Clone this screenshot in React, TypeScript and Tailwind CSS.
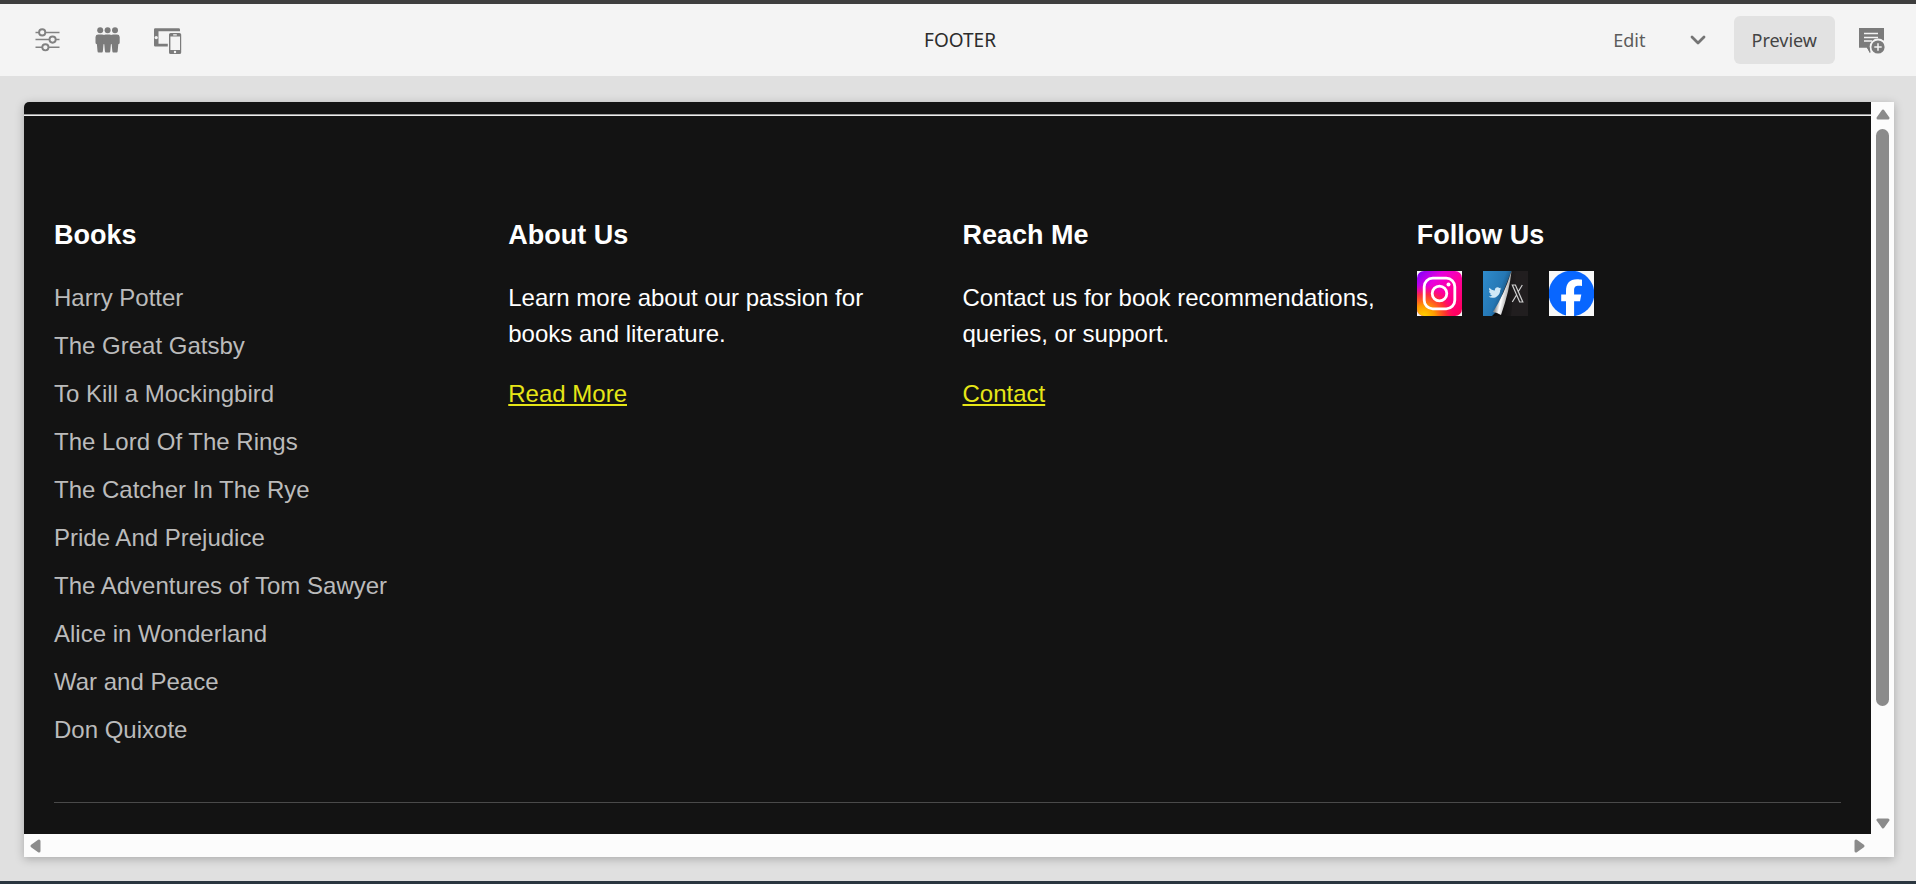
import React from "react";
import { FaTwitter } from "react-icons/fa6";

const books = [
  "Harry Potter",
  "The Great Gatsby",
  "To Kill a Mockingbird",
  "The Lord Of The Rings",
  "The Catcher In The Rye",
  "Pride And Prejudice",
  "The Adventures of Tom Sawyer",
  "Alice in Wonderland",
  "War and Peace",
  "Don Quixote",
];

function SlidersIcon() {
  return (
    <svg width="28" height="28" viewBox="0 0 28 28" fill="none" stroke="#828282" strokeWidth="1.6">
      <path d="M1.5 6.5H5M11.5 6.5H25.5M1.5 13.5H15.2M22 13.5H25.5M1.5 21.3H8M14.8 21.3H25.5" />
      <circle cx="8.2" cy="6.4" r="3.1" strokeWidth="1.9" />
      <circle cx="18.6" cy="13.6" r="3.1" strokeWidth="1.9" />
      <circle cx="11.4" cy="21.3" r="3.1" strokeWidth="1.9" />
    </svg>
  );
}

function PeopleIcon() {
  const body =
    "M-2 8.6H2Q4.5 8.6 4.7 11V16.5Q4.8 18 3.3 18.2L2.7 25Q2.6 26.5 1.6 26.5H-1.6Q-2.6 26.5 -2.7 25L-3.3 18.2Q-4.8 18 -4.7 16.5V11Q-4.5 8.6 -2 8.6Z";
  return (
    <svg width="28" height="28" viewBox="0 0 28 28" fill="#7b7b7b">
      {[6.2, 13.6, 21].map((x) => (
        <g key={x} transform={`translate(${x} 0)`}>
          <circle cx="0" cy="4.3" r="3" />
          <path d={body} />
        </g>
      ))}
    </svg>
  );
}

function DevicesIcon() {
  return (
    <svg width="28" height="28" viewBox="0 0 28 28">
      <path
        fill="#7b7b7b"
        fillRule="evenodd"
        d="M1.2 2.2H24.6Q26 2.2 26 3.6V5.2H4.5V17.8H13.8V20.6H1.2Q0 20.6 0 19.2V3.6Q0 2.2 1.2 2.2ZM2.2 9.9a1.7 1.7 0 1 0 0 3.4a1.7 1.7 0 1 0 0 -3.4Z"
      />
      <path
        fill="#7b7b7b"
        fillRule="evenodd"
        d="M16.6 7H25.4Q27.2 7 27.2 8.6V26.4Q27.2 28 25.4 28H16.6Q15 28 15 26.4V8.6Q15 7 16.6 7ZM16.4 10.5V23.9H26V10.5ZM21 24.8a1.2 1.2 0 1 0 0 2.4a1.2 1.2 0 1 0 0 -2.4ZM19.2 8.2V9.4H22.8V8.2Z"
      />
    </svg>
  );
}

function AnnotateIcon() {
  return (
    <svg width="28" height="28" viewBox="0 0 28 28">
      <path fill="#7b7b7b" d="M1 2H26V14.5H21L12.5 19L12 26.8L8.8 21.8H1Z" />
      <path stroke="#f4f4f4" strokeWidth="1.5" d="M6 7.6H20M6 11.4H20M6 15H14" fill="none" />
      <circle cx="20" cy="21" r="8.4" fill="#f4f4f4" />
      <path fill="#7b7b7b" d="M9 21H11.3L12.6 26.6L11.6 26.8Z" />
      <circle cx="20" cy="21" r="6.6" fill="#7b7b7b" />
      <path stroke="#f4f4f4" strokeWidth="1.5" d="M16.3 21H23.7M20 17.3V24.7" fill="none" />
    </svg>
  );
}

function InstagramLogo() {
  return (
    <svg width="45" height="45" viewBox="0 0 45 45">
      <defs>
        <linearGradient id="igBase" x1="0" y1="0" x2="1" y2="1">
          <stop offset="0" stopColor="#7a00ff" />
          <stop offset="0.3" stopColor="#e800dc" />
          <stop offset="0.55" stopColor="#ff00a0" />
          <stop offset="1" stopColor="#ff0050" />
        </linearGradient>
        <radialGradient id="igWarm" cx="0.15" cy="1.02" r="0.72">
          <stop offset="0" stopColor="#ffd600" />
          <stop offset="0.35" stopColor="#ff9a00" />
          <stop offset="0.7" stopColor="#ff3a20" stopOpacity="0.8" />
          <stop offset="1" stopColor="#ff0069" stopOpacity="0" />
        </radialGradient>
      </defs>
      <rect width="45" height="45" fill="#f5f5f5" />
      <rect width="45" height="45" rx="7" fill="url(#igBase)" />
      <rect width="45" height="45" rx="7" fill="url(#igWarm)" />
      <rect x="7.2" y="7.2" width="30.6" height="30.6" rx="8.5" fill="none" stroke="#fff" strokeWidth="2.8" />
      <circle cx="22.5" cy="22.5" r="7.3" fill="none" stroke="#fff" strokeWidth="2.8" />
      <circle cx="31.5" cy="13.5" r="2" fill="#fff" />
    </svg>
  );
}

function TwitterXLogo() {
  return (
    <svg width="45" height="45" viewBox="0 0 45 45">
      <defs>
        <linearGradient id="twBlue" x1="0" y1="0" x2="1" y2="0.6">
          <stop offset="0" stopColor="#2f8ccc" />
          <stop offset="0.6" stopColor="#2577b4" />
          <stop offset="1" stopColor="#0f3450" />
        </linearGradient>
        <linearGradient id="twCurl" x1="0.3" y1="0.4" x2="0.75" y2="0.6">
          <stop offset="0" stopColor="#8c8c8c" />
          <stop offset="0.45" stopColor="#ffffff" />
          <stop offset="1" stopColor="#b4b4b4" />
        </linearGradient>
        <linearGradient id="twShade" x1="0" y1="0" x2="1" y2="0">
          <stop offset="0" stopColor="#060606" />
          <stop offset="1" stopColor="#211e1f" />
        </linearGradient>
      </defs>
      <rect width="45" height="45" fill="#211e1f" />
      <path d="M28.5 0H34L28 45H8Z" fill="url(#twShade)" />
      <path d="M0 0H28.5L12 42L9 45H0Z" fill="url(#twBlue)" />
      <path d="M28.5 0Q26.5 20 18 44Q14 41.5 10 41Q21 24 28.5 0Z" fill="url(#twCurl)" />
      <g transform="translate(5.5 15)">
        <FaTwitter size={13} preserveAspectRatio="none" height={15} color="#cfe8f6" />
      </g>
      <path
        d="M29.3 14H32.4L39.8 31H36.7ZM39.3 14L34.9 21.3M29.3 31L33.7 23.8"
        fill="none"
        stroke="#cfcfcf"
        strokeWidth="1.2"
      />
    </svg>
  );
}

function FacebookLogo() {
  return (
    <svg width="45" height="45" viewBox="0 0 45 45">
      <rect width="45" height="45" fill="#f8f8f8" />
      <circle cx="22.5" cy="22.5" r="22.8" fill="#0866ff" />
      <path
        fill="#fff"
        d="M17 45V30.2H12.2V23.4H17V20.2C17 12.3 20.6 8.2 28 8.2C29.8 8.2 32 8.4 33 8.8V15C32 14.8 30.8 14.8 29.8 14.8C26.4 14.8 25.1 16.1 25.1 19.4V23.4H32.3L31 30.2H25.1V45Z"
      />
    </svg>
  );
}

function Arrow({ d }: { d: string }) {
  return (
    <svg width="14" height="14" viewBox="0 0 14 14" className="shrink-0">
      <path d={d} fill="#8b8b8b" stroke="#8b8b8b" strokeWidth="3" strokeLinejoin="round" />
    </svg>
  );
}

function Column({ title, children }: { title: string; children: React.ReactNode }) {
  return (
    <section className="min-w-0">
      <h3 className="mb-[15px] text-[27px] leading-[41px] font-bold text-white">{title}</h3>
      {children}
    </section>
  );
}

function Blurb({ text, link }: { text: string; link: string }) {
  return (
    <div className="pt-[9px] text-white">
      <p className="mb-6">{text}</p>
      <a href="#" className="text-[#e6e617] underline">
        {link}
      </a>
    </div>
  );
}

export default function App() {
  return (
    <div className="flex h-screen flex-col border-t-4 border-b-3 border-t-[#3e3e3e] border-b-[#2b3640] bg-[#e0e0e0]">
      <header className="grid h-[72px] shrink-0 grid-cols-[1fr_auto_1fr] items-center bg-[#f4f4f4] pr-[30px] pl-[34px] font-['Noto_Sans',sans-serif] text-[18px]">
        <div className="flex items-center gap-8">
          <button type="button" aria-label="Page information"><SlidersIcon /></button>
          <button type="button" aria-label="Audiences"><PeopleIcon /></button>
          <button type="button" aria-label="Emulator"><DevicesIcon /></button>
        </div>
        <h1 className="text-[19px] text-[#2c2c2c]">FOOTER</h1>
        <div className="flex items-center justify-end">
          <button type="button" className="mr-11 text-[#5c5c5c]">Edit</button>
          <button type="button" aria-label="Choose mode" className="mr-7">
            <svg width="16" height="16" viewBox="0 0 16 16" fill="none">
              <path d="M2 5L8 11L14 5" stroke="#747474" strokeWidth="2.8" strokeLinecap="round" strokeLinejoin="round" />
            </svg>
          </button>
          <button type="button" className="mr-[23px] h-12 rounded-md bg-[#e2e2e2] px-[18px] text-[#444444]">Preview</button>
          <button type="button" aria-label="Annotate"><AnnotateIcon /></button>
        </div>
      </header>

      <main className="flex min-h-0 flex-1 flex-col pt-[26px] pr-[22px] pb-6 pl-6">
        <div className="grid min-h-0 flex-1 grid-cols-[1fr_23px] grid-rows-[1fr_23px] overflow-hidden rounded-tl-[5px] bg-[#fcfcfc] shadow-[0_2px_10px_rgba(0,0,0,0.25)]">
          <footer className="min-h-0 overflow-hidden bg-[#131313] pt-3 font-['Liberation_Sans',Arial,sans-serif] text-[24px] leading-[36px]">
            <hr className="border-t border-b border-t-[#9a9a9a] border-b-[#eeeeee]" />
            <div className="px-[30px] pt-[99px]">
              <div className="grid grid-cols-4 gap-[30px] pb-[42px]">
                <Column title="Books">
                  <ul className="pt-[9px]">
                    {books.map((book) => (
                      <li key={book} className="mb-3">
                        <a href="#" className="text-[#bbbbbb]">{book}</a>
                      </li>
                    ))}
                  </ul>
                </Column>
                <Column title="About Us">
                  <Blurb text="Learn more about our passion for books and literature." link="Read More" />
                </Column>
                <Column title="Reach Me">
                  <Blurb text="Contact us for book recommendations, queries, or support." link="Contact" />
                </Column>
                <Column title="Follow Us">
                  <div className="flex gap-[21px]">
                    <a href="#" aria-label="Instagram"><InstagramLogo /></a>
                    <a href="#" aria-label="Twitter"><TwitterXLogo /></a>
                    <a href="#" aria-label="Facebook"><FacebookLogo /></a>
                  </div>
                </Column>
              </div>
              <hr className="border-t border-t-[#4a4a4a]" />
            </div>
          </footer>

          <div className="flex flex-col items-center pt-[5px] pb-1" aria-hidden="true">
            <Arrow d="M7 4L12 11H2Z" />
            <div className="mt-2 flex min-h-0 w-full flex-1 flex-col items-center">
              <div className="h-[84%] w-[13px] rounded-full bg-[#8b8b8b]" />
            </div>
            <Arrow d="M7 11L2 4H12Z" />
          </div>

          <div className="flex items-center justify-between px-[5px]" aria-hidden="true">
            <Arrow d="M3 7L10 2V12Z" />
            <Arrow d="M11 7L4 2V12Z" />
          </div>
        </div>
      </main>
    </div>
  );
}
